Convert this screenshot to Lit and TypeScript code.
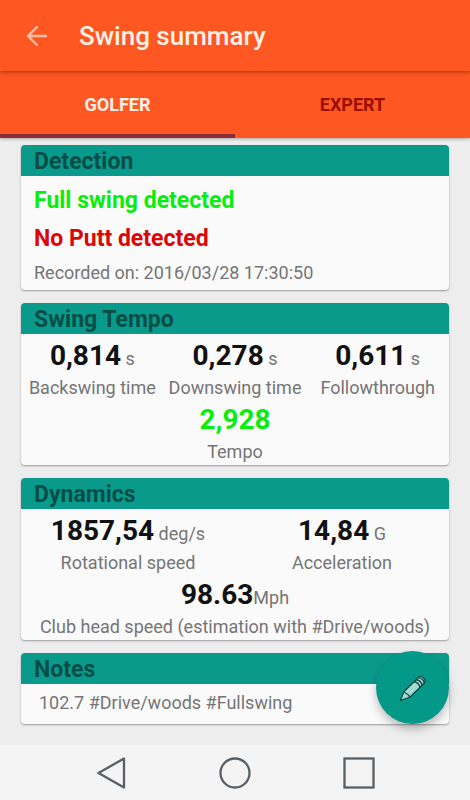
import { LitElement, html, css, svg } from "lit";
import { customElement, property, state } from "lit/decorators.js";
import { classMap } from "lit/directives/class-map.js";

interface Metric {
  value: string;
  unit?: string;
  label: string;
  good?: boolean;
  tight?: boolean;
}

const TEMPO: Metric[][] = [
  [
    { value: "0,814", unit: "s", label: "Backswing time" },
    { value: "0,278", unit: "s", label: "Downswing time" },
    { value: "0,611", unit: "s", label: "Followthrough" },
  ],
  [{ value: "2,928", label: "Tempo", good: true }],
];

const DYNAMICS: Metric[][] = [
  [
    { value: "1857,54", unit: "deg/s", label: "Rotational speed" },
    { value: "14,84", unit: "G", label: "Acceleration" },
  ],
  [
    {
      value: "98.63",
      unit: "Mph",
      label: "Club head speed (estimation with #Drive/woods)",
      tight: true,
    },
  ],
];

@customElement("summary-card")
class SummaryCard extends LitElement {
  @property() heading = "";

  static styles = css`
    :host {
      display: block;
      background: #fafafa;
      border-radius: 4px;
      overflow: hidden;
      box-shadow: 0 1px 2px rgba(0, 0, 0, 0.35);
    }
    .heading {
      margin: 0;
      padding: 2px 13px 0;
      background: #0a9a8c;
      color: #044e47;
      font-size: 23px;
      font-weight: 700;
      line-height: 29px;
    }
  `;

  render() {
    return html`<h2 class="heading">${this.heading}</h2><slot></slot>`;
  }
}

@customElement("metric-grid")
class MetricGrid extends LitElement {
  @property({ attribute: false }) rows: Metric[][] = [];

  static styles = css`
    :host {
      display: block;
      padding-top: 3px;
    }
    .row {
      display: flex;
    }
    .metric {
      flex: 1 1 0;
      text-align: center;
      white-space: nowrap;
    }
    .reading {
      line-height: 38px;
      height: 38px;
    }
    .value {
      font-size: 28px;
      font-weight: 700;
      color: #111;
    }
    .value.good {
      color: #08ee0c;
    }
    .label {
      line-height: 26px;
    }
  `;

  render() {
    return this.rows.map(
      (row) => html`<div class="row">
        ${row.map(
          (m) => html`<div class="metric">
            <div class="reading"><span class=${classMap({ value: true, good: !!m.good })}>${m.value}</span>${m.unit ? (m.tight ? "" : " ") + m.unit : ""}</div>
            <div class="label">${m.label}</div>
          </div>`
        )}
      </div>`
    );
  }
}

@customElement("app-root")
class AppRoot extends LitElement {
  @state() private tab = "GOLFER";

  static styles = css`
    :host {
      display: flex;
      flex-direction: column;
      min-height: 100vh;
      background: #ededed;
      color: #757575;
      font-family: Roboto, "Liberation Sans", sans-serif;
      font-size: 18px;
    }
    button {
      border: 0;
      padding: 0;
      background: none;
      font: inherit;
      cursor: pointer;
    }
    svg {
      display: block;
      fill: none;
    }
    .bar {
      display: flex;
      align-items: center;
      gap: 30px;
      height: 71px;
      padding: 0 25px;
      background: #ff5722;
      box-shadow: 0 1px 4px rgba(0, 0, 0, 0.4);
      z-index: 1;
    }
    .back {
      color: #ffc0a8;
    }
    .title {
      margin: 0;
      color: #fff1e8;
      font-size: 26px;
      font-weight: 500;
      line-height: 32px;
    }
    .tabs {
      display: flex;
      height: 67px;
      background: #ff5722;
      box-shadow: 0 1px 3px rgba(0, 0, 0, 0.3);
    }
    .tab {
      flex: 1;
      border-top: 4px solid transparent;
      border-bottom: 4px solid transparent;
      color: #990f00;
      font-weight: 700;
    }
    .tab.active {
      color: #fff1e8;
      border-bottom-color: #8c2d3c;
    }
    .content {
      position: relative;
      flex: 1;
      display: flex;
      flex-direction: column;
      gap: 13px;
      padding: 7px 21px 21px;
    }
    .detection {
      padding: 6px 13px 2px;
    }
    .detection p {
      margin: 0;
      line-height: 38px;
      font-size: 23px;
      font-weight: 700;
    }
    .detection .full {
      color: #08ee0c;
    }
    .detection .putt {
      color: #db0606;
    }
    .detection .recorded {
      font-size: 18px;
      font-weight: 400;
      line-height: 30px;
    }
    .notes {
      margin: 0;
      padding: 4px 18px 6px;
      line-height: 30px;
    }
    .fab {
      position: absolute;
      right: 21px;
      bottom: 21px;
      display: grid;
      place-items: center;
      width: 73px;
      height: 73px;
      border-radius: 50%;
      background: #049888;
      box-shadow: 0 5px 9px rgba(0, 0, 0, 0.25);
    }
    .nav {
      display: flex;
      justify-content: center;
      align-items: center;
      gap: 90px;
      height: 55px;
      background: #f4f4f4;
      color: #566066;
    }
  `;

  private renderTab(name: string) {
    const active = this.tab === name;
    return html`<button
      class=${classMap({ tab: true, active })}
      role="tab"
      aria-selected=${active ? "true" : "false"}
      @click=${() => (this.tab = name)}
    >${name}</button>`;
  }

  private navIcon(label: string, shape: unknown) {
    return html`<button aria-label=${label}>
      <svg width="34" height="34" viewBox="0 0 34 34" stroke="#566066" stroke-width="2.3">${shape}</svg>
    </button>`;
  }

  render() {
    return html`
      <header class="bar">
        <button class="back" aria-label="Back">
          <svg width="24" height="24" viewBox="0 0 24 24" stroke="currentColor" stroke-width="2.3">
            <path d="M22 12H3M12.5 2.5L3 12l9.5 9.5" />
          </svg>
        </button>
        <h1 class="title">Swing summary</h1>
      </header>
      <div class="tabs" role="tablist">
        ${this.renderTab("GOLFER")}${this.renderTab("EXPERT")}
      </div>
      <main class="content">
        <summary-card heading="Detection">
          <div class="detection">
            <p class="full">Full swing detected</p>
            <p class="putt">No Putt detected</p>
            <p class="recorded">Recorded on: 2016/03/28 17:30:50</p>
          </div>
        </summary-card>
        <summary-card heading="Swing Tempo">
          <metric-grid .rows=${TEMPO}></metric-grid>
        </summary-card>
        <summary-card heading="Dynamics">
          <metric-grid .rows=${DYNAMICS}></metric-grid>
        </summary-card>
        <summary-card heading="Notes">
          <p class="notes">102.7 #Drive/woods #Fullswing</p>
        </summary-card>
        <button class="fab" aria-label="Edit notes">
          <svg width="28" height="28" viewBox="0 0 28 28" stroke="#12403c" stroke-width="1.1" stroke-linejoin="round">
            <path fill="#9cdcd2" d="M1.5 26.500L5 17.500L19.500 3.500Q21.500 1.600 24 3.500Q27 6 25.500 9L11 23Z" />
            <path d="M5 17.500Q7 20 8.500 20.300Q9.500 21 11 23" />
            <path stroke-width="1.4" d="M15 7.800Q20 8.600 20.900 13.400M17.200 5.700Q22.200 6.500 23.100 11.300M19.400 3.600Q24.400 4.400 25.300 9.200" />
          </svg>
        </button>
      </main>
      <nav class="nav">
        ${this.navIcon("Back", svg`<path stroke-linejoin="round" d="M30 2.500V31.500L4.500 17Z" />`)}
        ${this.navIcon("Home", svg`<circle cx="17" cy="17" r="14.500" />`)}
        ${this.navIcon("Recent apps", svg`<rect x="2.500" y="2.500" width="29" height="29" />`)}
      </nav>
    `;
  }
}
